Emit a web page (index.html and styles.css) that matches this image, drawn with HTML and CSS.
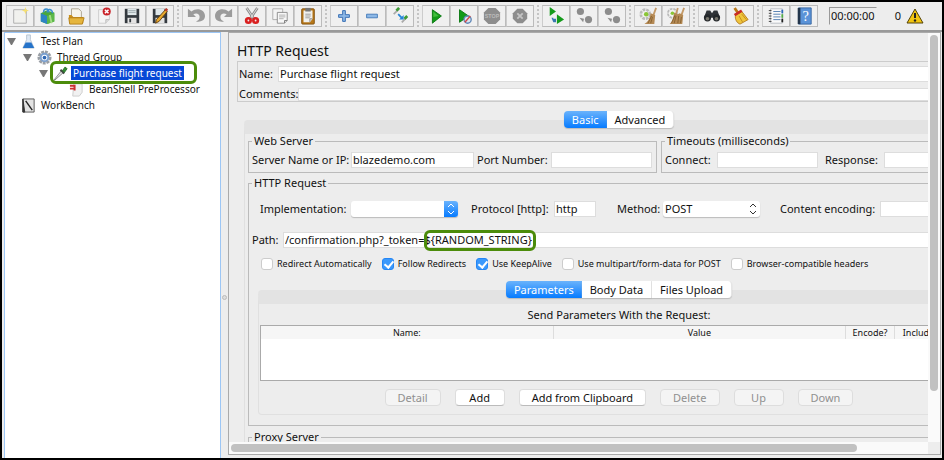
FILE: index.html
```html
<!DOCTYPE html>
<html lang="en">
<head>
  <meta charset="UTF-8">
  <meta name="viewport" content="width=device-width, initial-scale=1.0">
  <title>HTTP Request</title>
  <link rel="stylesheet" href="styles.css">
</head>
<body>
  <header class="toolbar">
    <div class="group">
      <button class="tool" aria-label="New"><svg viewBox="0 0 20 20"><path d="M3 3h14v15H3z" fill="#f1f1ee" stroke="#aaa"/><path d="M16 0l1 3 3 1-3 1-1 3-1-3-3-1 3-1z" fill="#f5df70"/></svg></button>
      <button class="tool" aria-label="Templates"><svg viewBox="0 0 20 20"><path d="M2 7l6-3 9 2v10l-8 3-7-3z" fill="#4aa83a"/><path d="M2 7l7 3v9l-7-3z" fill="#2d84c4"/><path d="M9 10l8-3v9l-8 3z" fill="#5cb849"/><path d="M5 6c0-5 6-5 6 0M9 6c0-5 6-4 6 1" fill="none" stroke="#3a8fcf" stroke-width="1.5"/><path d="M12 9l2 9" stroke="#a5dc88" stroke-width="2"/></svg></button>
      <button class="tool" aria-label="Open"><svg viewBox="0 0 20 20"><path d="M5 2h8l3 3v8H5z" fill="#f7f4ea" stroke="#a8a08c"/><path d="M2 9h3l2 2h11v7H3z" fill="#c98f1c"/><path d="M2 12h17l-2 7H3z" fill="#e5b53d" stroke="#b27d15"/></svg></button>
      <button class="tool" aria-label="Close"><svg viewBox="0 0 20 20"><path d="M4 3h12v11l-4 4H4z" fill="#f5f5f5" stroke="#ccc"/><path d="M12 18v-4h4" fill="#ddd" stroke="#bbb"/><circle cx="13" cy="5" r="4.5" fill="#c92329"/><path d="M11 3l4 4m0-4l-4 4" stroke="#fff" stroke-width="1.7"/></svg></button>
      <button class="tool" aria-label="Save"><svg viewBox="0 0 20 20"><path d="M2 2h16v16H2z" fill="#343a40"/><path d="M5 2h10v7H5z" fill="#dfe7ea"/><path d="M6 4h8M6 6h8" stroke="#9ca8ad"/><path d="M5 12h10v6H5z" fill="#e3e3e3"/><path d="M7 13h2v4H7z" fill="#343a40"/></svg></button>
      <button class="tool" aria-label="Save as"><svg viewBox="0 0 20 20"><path d="M2 2h16v16H2z" fill="#343a40"/><path d="M5 2h10v7H5z" fill="#dfe7ea"/><path d="M5 12h10v6H5z" fill="#e3e3e3"/><path d="M16 3l2 2-9 11-4 2 1-4z" fill="#e8a92c" stroke="#5d3b10"/><path d="M15 3l2-2 2 2-2 2z" fill="#c0392b"/></svg></button>
    </div>
    <span class="grip"></span>
    <div class="group">
      <button class="tool" aria-label="Undo"><svg viewBox="0 0 20 20"><path d="M1 2v9h9L7 8c4-2 7 0 7 3s-2 4-4 5c5 1 10-1 10-6 0-7-9-10-15-5z" fill="#9b9b9b"/></svg></button>
      <button class="tool" aria-label="Redo"><svg viewBox="0 0 20 20"><path d="M19 2v9h-9l3-3C9 6 6 8 6 11s2 4 4 5C5 17 0 15 0 10 0 3 9 0 15 5z" fill="#9b9b9b"/></svg></button>
      <button class="tool" aria-label="Cut"><svg viewBox="0 0 20 20"><path d="M4 1l8 12M16 1L8 13" stroke="#8c8c8c" stroke-width="3"/><path d="M4 1l8 12M16 1L8 13" stroke="#e4e4e4"/><circle cx="6" cy="15" r="2.500" fill="#eee" stroke="#d92020" stroke-width="3"/><circle cx="14" cy="15" r="2.500" fill="#eee" stroke="#d92020" stroke-width="3"/></svg></button>
      <button class="tool" aria-label="Copy"><svg viewBox="0 0 20 20"><path d="M2 2h11v12H2z" fill="#f4f4f4" stroke="#aaa"/><path d="M7 6h11v9l-3 3H7z" fill="#f7f7f7" stroke="#888"/><path d="M9 9h7M9 11h7M9 13h5" stroke="#aaa"/><path d="M15 18v-3h3" fill="none" stroke="#777"/></svg></button>
      <button class="tool" aria-label="Paste"><svg viewBox="0 0 20 20"><rect x="3" y="2" width="14" height="17" rx="1" fill="#b87818" stroke="#80500f"/><path d="M5 4h10v9l-3 4H5z" fill="#f0f0ed"/><path d="M7 1h6v4H7z" fill="#777"/><path d="M7 8h6M7 10h6M7 12h5" stroke="#999"/><path d="M12 17v-4h3" fill="#ccc" stroke="#999"/></svg></button>
    </div>
    <span class="grip"></span>
    <div class="group">
      <button class="tool" aria-label="Expand all"><svg viewBox="0 0 20 20"><path d="M8.500 4h3v4.500h4.500v3h-4.500v4.500h-3v-4.500H4v-3h4.500z" fill="#8db8e6" stroke="#2e68b0"/></svg></button>
      <button class="tool" aria-label="Collapse all"><svg viewBox="0 0 20 20"><path d="M4 8h12v4H4z" fill="#8db8e6" stroke="#4178b8"/></svg></button>
      <button class="tool" aria-label="Toggle"><svg viewBox="0 0 20 20"><path d="M3 8l6-6M12 17l6-6" stroke="#aaa" stroke-width="2"/><path d="M6 4l3-3M15 13l3-3" stroke="#3c9b36" stroke-width="3"/><path d="M8 8l4 4" stroke="#2484d8" stroke-width="2"/><path d="M14 9v5H9z" fill="#2484d8"/></svg></button>
    </div>
    <span class="grip"></span>
    <div class="group">
      <button class="tool" aria-label="Start"><svg viewBox="0 0 20 20"><path d="M6 3l10 7-10 8z" fill="#139b19" stroke="#087710"/><path d="M7 5l6 5-6 1z" fill="#42bd3e"/></svg></button>
      <button class="tool" aria-label="Start no pauses"><svg viewBox="0 0 20 20"><path d="M5 3l10 7-10 7z" fill="#139b19" stroke="#087710"/><circle cx="14" cy="14" r="4" fill="#d9e6f2" stroke="#5f87b7" stroke-width="1.500"/><path d="M11 17l6-7" stroke="#d34848" stroke-width="1.500"/></svg></button>
      <button class="tool" aria-label="Stop"><svg viewBox="0 0 20 20"><path d="M6 1h8l5 5v8l-5 5H6l-5-5V6z" fill="#8d8d8d"/><text x="10" y="12" text-anchor="middle" class="stop">STOP</text></svg></button>
      <button class="tool" aria-label="Shutdown"><svg viewBox="0 0 20 20"><path d="M7 2h6l5 5v6l-5 5H7l-5-5V7z" fill="#8d8d8d"/><path d="M7 7l6 6m0-6l-6 6" stroke="#c4c4c4" stroke-width="2"/></svg></button>
    </div>
    <span class="grip"></span>
    <div class="group">
      <button class="tool" aria-label="Remote start"><svg viewBox="0 0 20 20"><path d="M3 0l7 5-7 5zM11 8l8 6-8 5z" fill="#149b1b"/><path d="M5 12h2v1h3v4H7z" fill="#3878b0"/></svg></button>
      <button class="tool" aria-label="Remote stop"><svg viewBox="0 0 20 20"><circle cx="6" cy="5" r="4" fill="#8c8c8c"/><circle cx="15" cy="14" r="4" fill="#8c8c8c"/><path d="M5 12l5 1-1 4z" fill="#8c8c8c"/></svg></button>
      <button class="tool" aria-label="Remote shutdown"><svg viewBox="0 0 20 20"><circle cx="6" cy="5" r="4" fill="#8c8c8c"/><circle cx="15" cy="14" r="4" fill="#8c8c8c"/><path d="M5 12l5 1-1 4z" fill="#8c8c8c"/></svg></button>
    </div>
    <span class="grip"></span>
    <div class="group">
      <button class="tool" aria-label="Clear"><svg viewBox="0 0 20 20"><circle cx="7" cy="8" r="5" fill="#f3f3f0" stroke="#bbb" stroke-width="3" stroke-dasharray="3 1"/><circle cx="8" cy="8" r="2.500" fill="#8ac637"/><path d="M19 1l-3 8" stroke="#c49a68" stroke-width="2"/><path d="M13 7l5 2-1 10H6c4-2 6-6 7-12z" fill="#b58a55"/><path d="M14 10l-4 8m5-7l-2 7" stroke="#84602f"/></svg></button>
      <button class="tool" aria-label="Clear all"><svg viewBox="0 0 20 20"><circle cx="6" cy="7" r="5" fill="#f3f3f0" stroke="#bbb" stroke-width="2" stroke-dasharray="3 1"/><circle cx="6" cy="7" r="2" fill="#8ac637"/><path d="M12 1l-2 7m9-7l-3 8" stroke="#c49a68" stroke-width="2"/><path d="M8 6l4 2 2-1 4 2-1 10H3c3-3 4-7 5-13z" fill="#b58a55"/><path d="M9 9l-4 9m5-8l-2 8m5-8l-1 8m4-7l-1 7" stroke="#84602f"/></svg></button>
    </div>
    <span class="grip"></span>
    <div class="group">
      <button class="tool" aria-label="Search"><svg viewBox="0 0 20 20"><path d="M4 4h4l2 3 2-3h4l3 8H1z" fill="#303438"/><circle cx="5" cy="12" r="4" fill="#24282b"/><circle cx="15" cy="12" r="4" fill="#24282b"/><circle cx="5" cy="13" r="2" fill="#77756c"/><circle cx="15" cy="13" r="2" fill="#77756c"/></svg></button>
      <button class="tool" aria-label="Reset search"><svg viewBox="0 0 20 20"><path d="M4 1l4 6" stroke="#b97817" stroke-width="3"/><path d="M5 9l7-4 7 9-9 5c-3-1-6-5-5-10z" fill="#f0c53c" stroke="#b47b18"/><path d="M4 9l8-5" stroke="#c92c24" stroke-width="3"/><path d="M9 10l4 7m-1-9l5 6" stroke="#c08a1c"/></svg></button>
    </div>
    <span class="grip"></span>
    <div class="group">
      <button class="tool" aria-label="Function helper"><svg viewBox="0 0 20 20"><path d="M4 2h13v16H4z" fill="#fafafa" stroke="#b7bcc3"/><path d="M7 5h8M7 8h8M7 11h8M7 14h8" stroke="#4c79ae"/><path d="M2 4h3M2 7h3M2 10h3M2 13h3M2 16h3" stroke="#333"/><path d="M17 3v4" stroke="#2c67b8" stroke-width="2"/><path d="M17 8v4" stroke="#51a943" stroke-width="2"/><path d="M17 13v4" stroke="#222" stroke-width="2"/></svg></button>
      <button class="tool" aria-label="Help"><svg viewBox="0 0 20 20"><path d="M4 1h14v18H4z" fill="#5b93d8" stroke="#35659f"/><path d="M3 1h3v18H3z" fill="#24364c"/><text x="12" y="15" text-anchor="middle" class="help">?</text></svg></button>
    </div>
    <output class="timer">00:00:00</output>
    <span class="errors">0</span>
    <svg class="warn" viewBox="0 0 18 16"><path d="M9 1l8 14H1z" fill="#f1c40f" stroke="#53430a" stroke-linejoin="round"/><path d="M9 5v5" stroke="#222" stroke-width="2"/><circle cx="9" cy="12.500" r="1.200" fill="#222"/></svg>
  </header>

  <main class="split">
    <nav class="tree">
      <ul>
        <li class="node"><span class="arrow"></span><svg viewBox="0 0 16 16"><path d="M6 1h4v5l4 9H2l4-9z" fill="#dfe9f4" stroke="#b8c4d2"/><path d="M5 9h6l3 6H2z" fill="#2673c9"/></svg><span class="label">Test Plan</span></li>
        <li class="node level-1"><span class="arrow"></span><svg viewBox="0 0 16 16"><circle cx="8" cy="8" r="6" fill="#ddd" stroke="#9a9fa5" stroke-width="3" stroke-dasharray="3 1"/><circle cx="8" cy="8" r="4" fill="#fff" stroke="#7aa0d0" stroke-width="2"/><circle cx="8" cy="8" r="2" fill="#2f67b3"/></svg><span class="label">Thread Group</span></li>
        <li class="node level-2"><span class="arrow"></span><svg viewBox="0 0 16 16"><path d="M1 15l8-10 2 2-9 8z" fill="#e6e6e6" stroke="#888"/><path d="M8 4l4 4" stroke="#444" stroke-width="2"/><path d="M10 5l3-4 2 2-3 4z" fill="#348b34" stroke="#256d25"/></svg><span class="label selected">Purchase flight request</span><span class="mark mark-node"></span></li>
        <li class="node level-3"><span class="arrow leaf"></span><svg viewBox="0 0 16 16"><path d="M5 2h9v9l-3 4H4z" fill="#f1f1f1" stroke="#ccc"/><path d="M1 4h5v5M1 7h4" fill="none" stroke="#cd3030" stroke-width="2"/></svg><span class="label">BeanShell PreProcessor</span></li>
        <li class="node"><span class="arrow leaf"></span><svg viewBox="0 0 16 16"><path d="M2 1h12v14H2z" fill="#e3e3e3" stroke="#555"/><path d="M2 1v14h2z" fill="#333" stroke="#333"/><path d="M5 3l7 10" stroke="#222" stroke-width="1.500"/></svg><span class="label">WorkBench</span></li>
      </ul>
    </nav>
    <div class="divider"><span class="knob"></span></div>

    <section class="editor">
      <div class="view">
        <form class="request">
          <h1>HTTP Request</h1>
          <div class="names">
            <div class="line"><label for="name">Name:</label><input id="name" type="text" value="Purchase flight request"></div>
            <div class="line comments"><label for="comments">Comments:</label><input id="comments" type="text"></div>
          </div>

          <div class="main-tabs">
            <div class="tabs">
              <button type="button" class="tab active">Basic</button><button type="button" class="tab">Advanced</button>
            </div>
            <div class="pane basic">
              <div class="servers">
                <fieldset class="row web">
                  <legend>Web Server</legend>
                  <label for="server">Server Name or IP:</label><input id="server" type="text" value="blazedemo.com">
                  <label for="port">Port Number:</label><input id="port" type="text">
                </fieldset>
                <fieldset class="row timeouts">
                  <legend>Timeouts (milliseconds)</legend>
                  <label for="connect">Connect:</label><input id="connect" type="text">
                  <label for="response">Response:</label><input id="response" type="text">
                </fieldset>
              </div>

              <fieldset class="http">
                <legend>HTTP Request</legend>
                <div class="row protocol">
                  <label for="impl">Implementation:</label>
                  <span class="combo blue"><select id="impl"><option></option><option>HttpClient4</option><option>Java</option></select><svg viewBox="0 0 14 16"><path d="M4 6l3-3 3 3M4 10l3 3 3-3"/></svg></span>
                  <label for="proto">Protocol [http]:</label><input id="proto" type="text" value="http">
                  <label for="method">Method:</label>
                  <span class="combo"><select id="method"><option>POST</option><option>GET</option></select><svg viewBox="0 0 14 16"><path d="M4 6l3-3 3 3M4 10l3 3 3-3"/></svg></span>
                  <label for="encoding">Content encoding:</label><input id="encoding" type="text">
                </div>
                <div class="row path">
                  <label for="path">Path:</label>
                  <div class="path-box"><input id="path" type="text" value="/confirmation.php?_token=${RANDOM_STRING}"><span class="mark mark-token"></span></div>
                </div>
                <div class="checks">
                  <label><input type="checkbox">Redirect Automatically</label>
                  <label><input type="checkbox" checked>Follow Redirects</label>
                  <label><input type="checkbox" checked>Use KeepAlive</label>
                  <label><input type="checkbox">Use multipart/form-data for POST</label>
                  <label><input type="checkbox">Browser-compatible headers</label>
                </div>

                <div class="inner">
                  <div class="tabs">
                    <button type="button" class="tab active">Parameters</button><button type="button" class="tab">Body Data</button><button type="button" class="tab">Files Upload</button>
                  </div>
                  <div class="pane">
                    <p class="caption" id="caption">Send Parameters With the Request:</p>
                    <div class="grid">
                      <table aria-labelledby="caption">
                        <thead>
                          <tr><th>Name:</th><th>Value</th><th class="encode">Encode?</th><th class="include">Include Equals?</th></tr>
                        </thead>
                      </table>
                    </div>
                    <div class="actions">
                      <button type="button" disabled>Detail</button>
                      <button type="button">Add</button>
                      <button type="button">Add from Clipboard</button>
                      <button type="button" disabled>Delete</button>
                      <button type="button" disabled>Up</button>
                      <button type="button" disabled>Down</button>
                    </div>
                  </div>
                </div>
              </fieldset>

              <fieldset class="proxy">
                <legend>Proxy Server</legend>
              </fieldset>
            </div>
          </div>
        </form>
      </div>
      <div class="track vertical"><span class="thumb"></span></div>
      <div class="track horizontal"><span class="thumb"></span></div>
    </section>
  </main>
</body>
</html>
```

FILE: styles.css
```css
* {
  box-sizing: border-box;
}

body {
  display: flex;
  flex-direction: column;
  height: 100vh;
  margin: 0;
  border: 2px solid #000;
  background-color: #ededed;
  color: #111;
  font: 11px/14px "Noto Sans", "Open Sans", sans-serif;
  overflow: hidden;
}

input, select, button {
  font: inherit;
  color: inherit;
}

ul {
  list-style: none;
  margin: 0;
  padding: 0;
}

/* Toolbar */
.toolbar {
  display: flex;
  align-items: center;
  flex: none;
  height: 30px;
  padding: 0 4px;
  border-bottom: 2px solid #999;
}

.group {
  display: flex;
}

.tool {
  width: 28px;
  height: 22px;
  padding: 0 3px;
  border: 1px solid #bbb;
  border-left-color: #ccc;
  background-color: #f0f0f0;
}

.tool svg {
  display: block;
  width: 20px;
  height: 18px;
}

.stop {
  font: bold 6px "Liberation Sans", sans-serif;
  fill: #bbb;
}

.help {
  font: 16px "Liberation Serif", serif;
  fill: #fff;
}

.grip {
  width: 2px;
  height: 22px;
  margin: 0 3px;
  border-left: 2px dotted #c4c4c4;
}

.timer {
  margin-left: 11px;
  padding: 1px;
  border: 1px solid #999;
  border-right-color: #eee;
  border-bottom-color: #eee;
}

.errors {
  margin-left: 18px;
}

.warn {
  width: 18px;
  height: 16px;
  margin-left: 5px;
}

/* Tree */
.split {
  display: flex;
  flex: 1;
  min-height: 0;
  padding-left: 2px;
}

.tree {
  flex: 0 0 217px;
  border: 1px solid #9cc6f5;
  border-width: 1px 1px 0;
  background-color: #fff;
  font-size: 10px;
}

.node {
  position: relative;
  display: flex;
  align-items: center;
  height: 16px;
  padding-left: 2px;
}

.level-1 {
  padding-left: 18px;
}

.level-2 {
  padding-left: 34px;
}

.level-3 {
  padding-left: 50px;
}

.arrow {
  width: 9px;
  margin-right: 5px;
  border: 4px solid transparent;
  border-top: 7px solid #777;
  border-bottom: 0;
}

.leaf {
  border-color: transparent;
}

.node svg {
  flex: none;
  width: 15px;
  height: 15px;
}

.label {
  padding: 0 2px;
  margin-left: 3px;
}

.selected {
  background-color: #0748d6;
  color: #fff;
}

.mark {
  position: absolute;
  border: 3px solid #4c8c0b;
  border-radius: 6px;
  pointer-events: none;
}

.mark-node {
  top: -4px;
  left: 45px;
  width: 147px;
  height: 23px;
  z-index: 1;
}

.divider {
  display: flex;
  flex-direction: column;
  flex: none;
  align-items: center;
  width: 7px;
}

.divider::before {
  content: "";
  flex: 5;
}

.divider::after {
  content: "";
  flex: 3;
}

.knob {
  width: 5px;
  height: 5px;
  border: 1px solid #bbb;
  border-radius: 50%;
  background-color: #ddd;
}

/* Editor */
.editor {
  display: grid;
  grid-template-columns: 1fr 12px;
  grid-template-rows: 1fr 12px;
  flex: 1;
  min-width: 0;
  margin: 0 1px 3px 0;
  border: 1px solid #aaa;
}

.view {
  overflow: hidden;
}

.track {
  padding: 2px;
  background-color: #fafafa;
}

.thumb {
  display: block;
  border-radius: 4px;
  background-color: #c1c1c1;
}

.vertical .thumb {
  width: 8px;
  height: 88%;
}

.horizontal .thumb {
  width: 90%;
  height: 8px;
}

.request {
  min-width: 780px;
  padding: 8px 15px 0 8px;
}

h1 {
  margin: 0;
  font-size: 14px;
  line-height: 20px;
  font-weight: normal;
}

.names {
  height: 41px;
  padding-top: 4px;
  border: 1px solid #ccc;
}

.line {
  display: grid;
  grid-template-columns: 40px 1fr;
  align-items: center;
}

.comments {
  grid-template-columns: 60px 1fr;
  margin-top: 5px;
}

.comments input[type="text"] {
  height: 13px;
}

label {
  padding-left: 1px;
  white-space: nowrap;
}

input[type="text"] {
  width: 100%;
  min-width: 0;
  height: 16px;
  padding: 0 1px 2px;
  border: 1px solid #ddd;
  background-color: #fff;
}

.tabs {
  position: relative;
  display: flex;
  justify-content: center;
  margin-bottom: -8px;
}

.tab {
  height: 17px;
  padding: 0 8px;
  border: 0;
  border-right: 1px solid #e5e5e5;
  background-color: #fff;
  box-shadow: 0 1px 1px #bbb;
  line-height: 16px;
}

.tab:first-child {
  border-radius: 4px 0 0 4px;
}

.tab:last-child {
  border-radius: 0 4px 4px 0;
}

.tab.active {
  border: 0;
  background: linear-gradient(#6ab3fc, #067bff);
  color: #fff;
}

.main-tabs {
  margin: 9px 0 0 7px;
}

.pane {
  border: 1px solid #e0e0e0;
  border-top: 14px solid #e3e3e3;
  border-radius: 4px;
}

.basic {
  padding: 0 3px;
}

fieldset {
  min-width: 0;
  margin: 0;
  padding: 0 2px;
  border: 1px solid #bbb;
}

legend {
  margin-left: 1px;
  padding: 0 2px;
}

.servers {
  display: grid;
  grid-template-columns: 409fr 329fr;
  gap: 4px;
}

.row {
  display: grid;
  align-items: center;
}

.web {
  grid-template-columns: 100px 123px 77px 101px;
  padding: 4px 2px;
}

.web input + label {
  padding-left: 3px;
}

.timeouts {
  grid-template-columns: 53px 101px 66px 1fr;
  padding: 4px 2px;
}

.timeouts input + label {
  padding-left: 7px;
}

.http {
  margin-top: 3px;
  padding-bottom: 10px;
}

.protocol {
  grid-template-columns: 92px 107px 12px 84px 42px 20px 47px 97px 19px 101px 1fr;
  padding: 11px 8px 0;
}

.protocol label[for="proto"] {
  grid-column: 4;
}

.protocol label[for="method"] {
  grid-column: 7;
}

.protocol label[for="encoding"] {
  grid-column: 10;
}

.combo {
  display: flex;
  height: 16px;
  border-radius: 3px;
  background-color: #fff;
  box-shadow: 0 1px 1px #bbb;
  overflow: hidden;
}

.combo select {
  flex: 1;
  min-width: 0;
  padding: 0 2px;
  border: 0;
  background: none;
  appearance: none;
}

.combo svg {
  width: 14px;
  height: 16px;
  fill: none;
  stroke: #333;
}

.blue svg {
  background: linear-gradient(#6ab3fc, #067bff);
  stroke: #fff;
}

.path {
  grid-template-columns: 32px 1fr;
  margin-top: 15px;
}

.path-box {
  position: relative;
  display: flex;
}

.mark-token {
  top: -2px;
  left: 141px;
  width: 112px;
  height: 21px;
}

.checks {
  display: flex;
  gap: 9px;
  margin-top: 9px;
  padding-left: 9px;
  font-size: 9px;
}

.checks label {
  display: flex;
  align-items: center;
  gap: 4px;
}

.checks input {
  width: 12px;
  height: 12px;
  margin: 0;
  border: 1px solid #ccc;
  border-radius: 3px;
  background-color: #fff;
  appearance: none;
}

.checks input:checked {
  border-color: #2486f5;
  background-color: #3b99fc;
}

.checks input:checked::after {
  content: "";
  display: block;
  width: 4px;
  height: 7px;
  margin: 0 3px;
  border: solid #fff;
  border-width: 0 2px 2px 0;
  transform: rotate(40deg);
}

.inner {
  margin-top: 10px;
  padding: 0 7px;
}

.caption {
  margin: 4px 0 3px;
  text-align: center;
}

.grid {
  height: 56px;
  margin: 0 1px;
  border: 1px solid #aaa;
  background-color: #fff;
}

table {
  width: 100%;
  table-layout: fixed;
  border-collapse: collapse;
}

th {
  height: 13px;
  padding: 0;
  border-right: 1px solid #ddd;
  background-color: #f6f6f6;
  font-size: 9px;
  line-height: 12px;
  font-weight: normal;
  white-space: nowrap;
}

.encode {
  width: 49px;
}

.include {
  width: 82px;
}

.actions {
  display: flex;
  justify-content: center;
  gap: 14px;
  padding: 8px 0;
}

.actions button {
  min-width: 50px;
  height: 17px;
  padding: 0 12px;
  border: 1px solid #ddd;
  border-bottom-color: #bbb;
  border-radius: 4px;
  background-color: #fff;
  line-height: 14px;
}

.actions button:disabled {
  border-color: #ddd;
  background-color: #f4f4f4;
  color: #909090;
}

.proxy {
  height: 60px;
  margin-top: 4px;
}
```
